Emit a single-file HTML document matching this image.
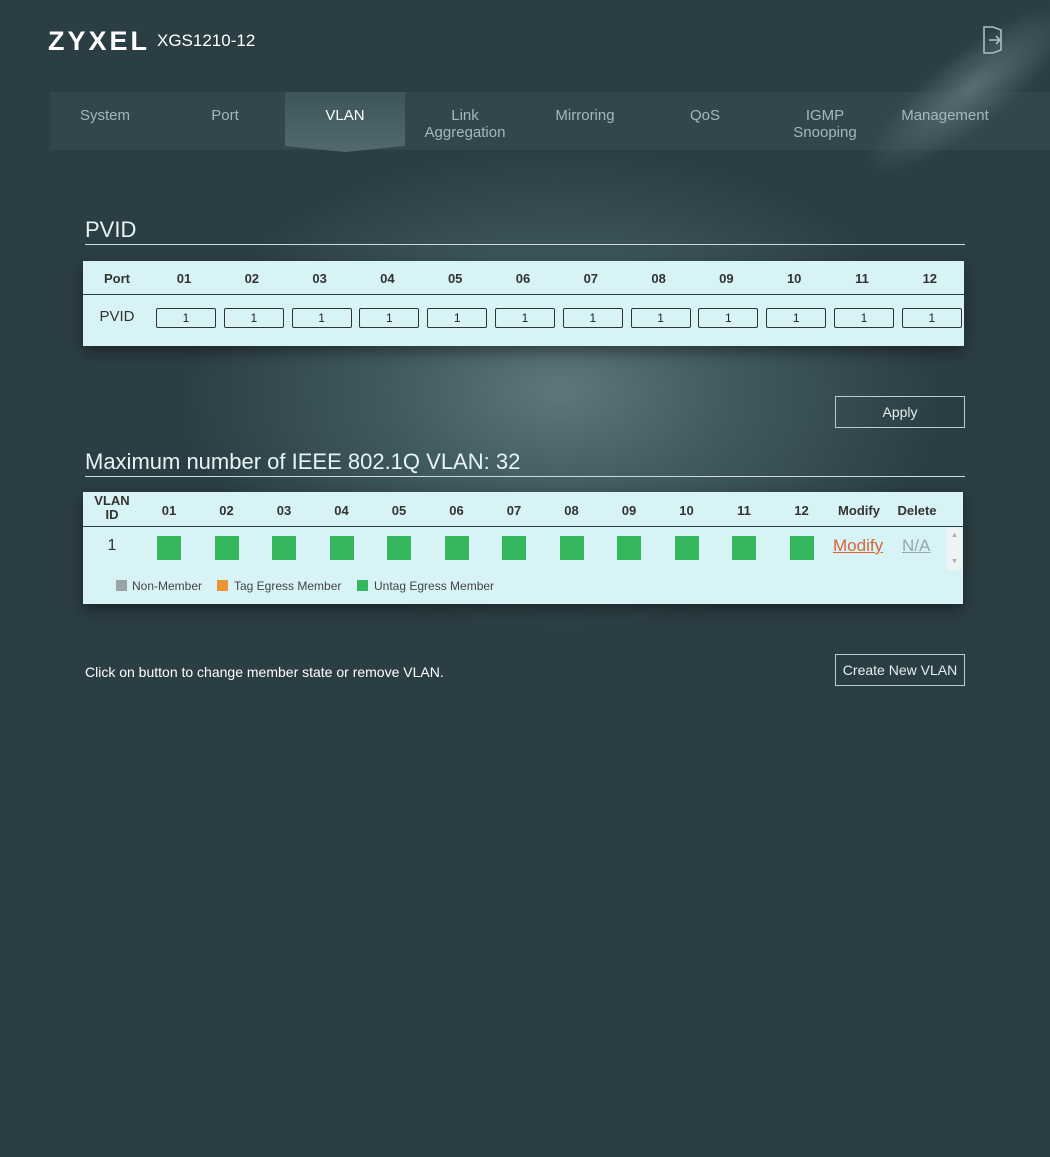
<!DOCTYPE html>
<html><head><meta charset="utf-8"><style>
*{margin:0;padding:0;box-sizing:border-box}
body{width:1050px;height:1157px;position:relative;overflow:hidden;font-family:"Liberation Sans",Arial,sans-serif;
background:radial-gradient(ellipse 380px 240px at 560px 390px,#5d777b 0%,#415a5f 45%,#2b3e44 100%) #2b3e44;}
.beam{position:absolute;left:820px;top:-60px;width:300px;height:300px;background:radial-gradient(ellipse 50px 170px at 50% 50%,rgba(170,200,200,.35),rgba(170,200,200,0) 75%);transform:rotate(52deg);}
.a{position:absolute}
.logo{left:48px;top:26px;color:#fff;font-size:27px;font-weight:bold;letter-spacing:3px}
.model{left:157px;top:31px;color:#fff;font-size:17px}
.navbar{left:50px;top:92px;width:1000px;height:58px;background:rgba(80,105,110,.2)}
.nav{position:absolute;top:107px;width:120px;text-align:center;color:#a3b8ba;font-size:15px;line-height:17px}
.act{left:285px;top:92px;width:120px;height:60px;background:linear-gradient(#3d5559,#52696d);clip-path:polygon(0 0,100% 0,100% 90%,50% 100%,0 90%)}
h2{position:absolute;color:#e6f4f6;font-weight:normal;font-size:22px}
.hr{position:absolute;left:85px;width:880px;height:1px;background:#c9dadc}
.tbl{position:absolute;background:#d8f3f5;box-shadow:0 6px 14px rgba(0,0,0,.4)}
.th{position:absolute;font-weight:bold;font-size:13px;color:#333;text-align:center;width:60px}
.in{position:absolute;width:60px;height:20px;border:1px solid #333;border-radius:2px;text-align:center;font-size:12px;line-height:18px;color:#222}
.sq{position:absolute;width:24px;height:24px;background:#35b75e}
.btn{position:absolute;left:835px;width:130px;height:32px;border:1px solid #b9cccf;color:#e3eff0;font-size:14px;text-align:center;line-height:30px}
</style></head><body>
<div class="beam"></div>
<div class="a logo">ZYXEL</div>
<div class="a model">XGS1210-12</div>
<svg class="a" style="left:981px;top:25px" width="24" height="30" viewBox="0 0 24 30"><path d="M12 2H3v26h9l8-3V5z" fill="none" stroke="#a9bfc1" stroke-width="1.6"/><path d="M8 15h11M15 11l4 4-4 4" fill="none" stroke="#a9bfc1" stroke-width="1.6"/></svg>
<div class="a navbar"></div>
<div class="a act"></div>
<div class="nav" style="left:45px">System</div>
<div class="nav" style="left:165px">Port</div>
<div class="nav" style="left:285px;color:#fff">VLAN</div>
<div class="nav" style="left:405px">Link<br>Aggregation</div>
<div class="nav" style="left:525px">Mirroring</div>
<div class="nav" style="left:645px">QoS</div>
<div class="nav" style="left:765px">IGMP<br>Snooping</div>
<div class="nav" style="left:885px">Management</div>

<h2 style="left:85px;top:217px">PVID</h2>
<div class="hr" style="top:244px"></div>
<div class="tbl" style="left:83px;top:261px;width:881px;height:85px">
<div style="position:absolute;left:0;top:33px;width:881px;height:1px;background:#2b3e44"></div>
<div class="th" style="left:4px;top:10px">Port</div>
<div style="position:absolute;left:4px;top:47px;width:60px;text-align:center;font-size:15px;color:#333">PVID</div>
</div>
<div id="p"></div>

<div class="btn" style="top:396px">Apply</div>

<h2 style="left:85px;top:449px">Maximum number of IEEE 802.1Q VLAN: 32</h2>
<div class="hr" style="top:476px"></div>
<div class="tbl" style="left:83px;top:492px;width:880px;height:112px">
<div style="position:absolute;left:0;top:34px;width:880px;height:1px;background:#2b3e44"></div>
<div class="th" style="left:-1px;top:2px;line-height:14px">VLAN<br>ID</div>
<div style="position:absolute;left:19px;top:45px;width:20px;text-align:center;font-size:16px;color:#333">1</div>
<div class="th" style="left:746px;top:11px">Modify</div>
<div class="th" style="left:804px;top:11px">Delete</div>
<div style="position:absolute;left:750px;top:44px;font-size:17px;color:#d9643a;text-decoration:underline">Modify</div>
<div style="position:absolute;left:819px;top:44px;font-size:17px;color:#93a9b0;text-decoration:underline">N/A</div>
<div style="position:absolute;left:864px;top:36px;width:15px;height:42px;background:#eef3f3"><div style="font-size:7px;color:#aaa;text-align:center;line-height:10px;margin-top:3px">▲</div><div style="font-size:7px;color:#aaa;text-align:center;line-height:10px;margin-top:16px">▼</div></div>
<div style="position:absolute;left:33px;top:88px;width:11px;height:11px;background:#9aa3a6"></div>
<div style="position:absolute;left:49px;top:87px;font-size:12px;color:#444">Non-Member</div>
<div style="position:absolute;left:134px;top:88px;width:11px;height:11px;background:#ec9434"></div>
<div style="position:absolute;left:151px;top:87px;font-size:12px;color:#444">Tag Egress Member</div>
<div style="position:absolute;left:274px;top:88px;width:11px;height:11px;background:#35b75e"></div>
<div style="position:absolute;left:291px;top:87px;font-size:12px;color:#444">Untag Egress Member</div>
</div>
<div id="v"></div>

<div class="a" style="left:85px;top:664px;color:#fff;font-size:14px">Click on button to change member state or remove VLAN.</div>
<div class="btn" style="top:654px">Create New VLAN</div>

<script>
var p='',v='';
for(var i=0;i<12;i++){var n=(i<9?'0':'')+(i+1);
var cx=184+i*67.8;
p+='<div class="th" style="left:'+(cx-30)+'px;top:271px">'+n+'</div><div class="in" style="left:'+(cx-28)+'px;top:308px">1</div>';
var vx=169+i*57.5;
v+='<div class="th" style="left:'+(vx-30)+'px;top:503px">'+n+'</div><div class="sq" style="left:'+(vx-12)+'px;top:536px"></div>';}
document.getElementById('p').innerHTML=p;document.getElementById('v').innerHTML=v;
</script>
</body></html>
